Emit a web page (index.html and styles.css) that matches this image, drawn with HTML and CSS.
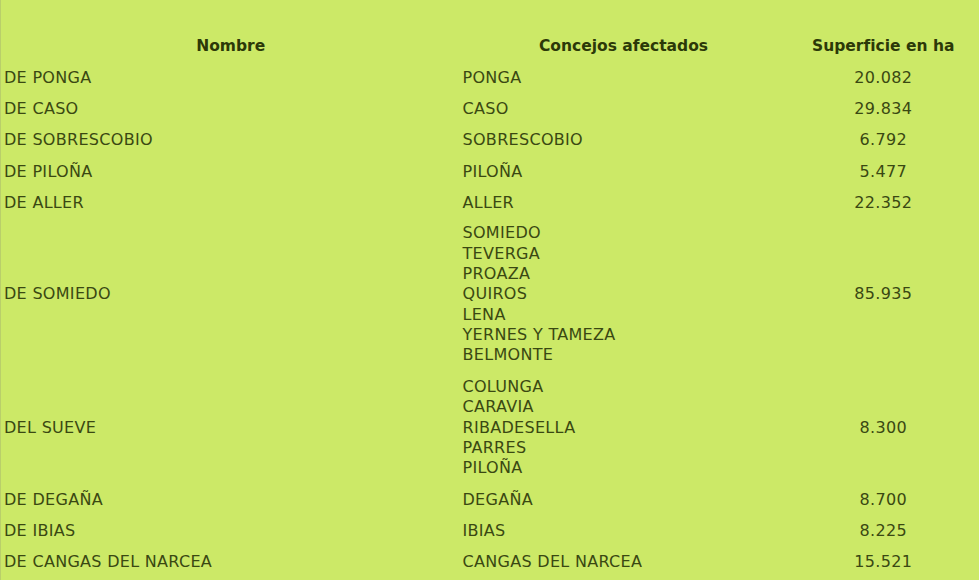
FILE: index.html
```html
<!DOCTYPE html>
<html lang="es">
<head>
<meta charset="utf-8">
<title>Reservas</title>
<link rel="stylesheet" href="styles.css">
</head>
<body>
<div class="page">
<table class="reservas">
  <thead>
    <tr>
      <th class="c-nombre">Nombre</th>
      <th class="c-concejos">Concejos afectados</th>
      <th class="c-sup">Superficie en ha</th>
    </tr>
  </thead>
  <tbody>
    <tr><td>DE PONGA</td><td>PONGA</td><td class="num">20.082</td></tr>
    <tr><td>DE CASO</td><td>CASO</td><td class="num">29.834</td></tr>
    <tr><td>DE SOBRESCOBIO</td><td>SOBRESCOBIO</td><td class="num">6.792</td></tr>
    <tr><td>DE PILOÑA</td><td>PILOÑA</td><td class="num">5.477</td></tr>
    <tr><td>DE ALLER</td><td>ALLER</td><td class="num">22.352</td></tr>
    <tr class="tight"><td>DE SOMIEDO</td><td>SOMIEDO<br>TEVERGA<br>PROAZA<br>QUIROS<br>LENA<br>YERNES Y TAMEZA<br>BELMONTE</td><td class="num">85.935</td></tr>
    <tr><td>DEL SUEVE</td><td>COLUNGA<br>CARAVIA<br>RIBADESELLA<br>PARRES<br>PILOÑA</td><td class="num">8.300</td></tr>
    <tr><td>DE DEGAÑA</td><td>DEGAÑA</td><td class="num">8.700</td></tr>
    <tr><td>DE IBIAS</td><td>IBIAS</td><td class="num">8.225</td></tr>
    <tr><td>DE CANGAS DEL NARCEA</td><td>CANGAS DEL NARCEA</td><td class="num">15.521</td></tr>
  </tbody>
</table>
</div>
</body>
</html>
```

FILE: styles.css
```css
html, body {
  margin: 0;
  padding: 0;
  background: #cce967;
}
.page {
  border-left: 1px solid #b9cf6a;
  padding-top: 30.8px;
  min-height: 549px;
}
.reservas {
  width: 978px;
  border-collapse: collapse;
  table-layout: fixed;
  font-family: "DejaVu Sans", Verdana, sans-serif;
  font-size: 16px;
  line-height: 20.37px;
  letter-spacing: 0.3px;
  color: #3a4812;
}
.reservas th,
.reservas td {
  padding: 5.5px 2px 5.5px 3px;
  vertical-align: middle;
  text-align: left;
}
.reservas th {
  font-weight: bold;
  text-align: center;
  color: #2c3908;
  font-size: 15.5px;
  letter-spacing: 0;
}
.reservas tr.tight td {
  padding-top: 4.1px;
}
.c-nombre { width: 453.5px; }
.c-concejos { width: 322px; }
.c-sup { width: 187.5px; }
.reservas td.num {
  text-align: center;
}
```
